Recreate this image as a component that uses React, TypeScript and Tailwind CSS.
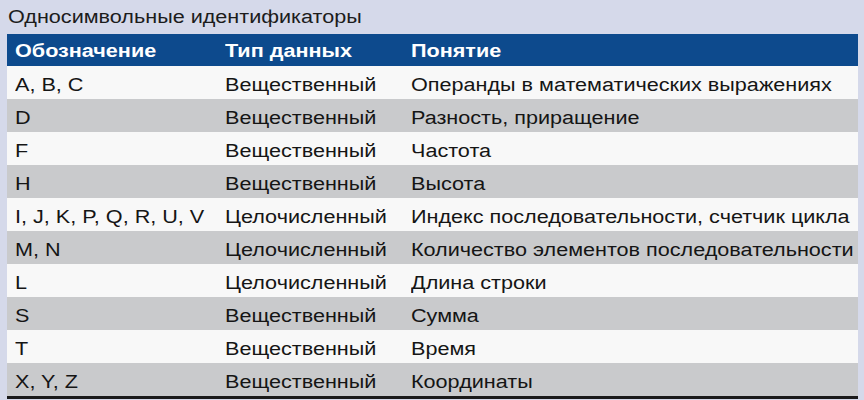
const rows: [string, string, string][] = [
  ["A, B, C", "Вещественный", "Операнды в математических выражениях"],
  ["D", "Вещественный", "Разность, приращение"],
  ["F", "Вещественный", "Частота"],
  ["H", "Вещественный", "Высота"],
  ["I, J, K, P, Q, R, U, V", "Целочисленный", "Индекс последовательности, счетчик цикла"],
  ["M, N", "Целочисленный", "Количество элементов последовательности"],
  ["L", "Целочисленный", "Длина строки"],
  ["S", "Вещественный", "Сумма"],
  ["T", "Вещественный", "Время"],
  ["X, Y, Z", "Вещественный", "Координаты"],
]

// the source picture is stretched sideways, so text is widened a bit
function Txt({ children }: { children: string }) {
  return <span className="inline-block origin-left scale-x-[1.2] whitespace-nowrap">{children}</span>
}

export default function App() {
  return (
    <div className="w-[864px] h-[400px] overflow-hidden bg-[#d5d9ea] font-['Liberation_Sans',Arial,sans-serif] text-[#151515]">
      <div className="h-[34px] pl-[8px] pt-[6px] text-[18px] leading-[22px] text-[#1c1c1c]">
        <Txt>Односимвольные идентификаторы</Txt>
      </div>
      <div className="ml-[7px] w-[851px]">
        <div className="flex h-[32px] items-center pt-[3px] bg-[#0d4a8d] text-[18px] font-bold text-white">
          <div className="w-[211px] pl-[8px]"><Txt>Обозначение</Txt></div>
          <div className="w-[186px] pl-[7px]"><Txt>Тип данных</Txt></div>
          <div className="flex-1 pl-[7px]"><Txt>Понятие</Txt></div>
        </div>
        {rows.map((r, i) => (
          <div
            key={r[0]}
            className={`flex h-[33px] items-center pt-[5px] text-[18px] ${i % 2 === 0 ? "bg-[#f8f8f8]" : "bg-[#c9cacc]"}`}
          >
            <div className="w-[211px] pl-[8px]"><Txt>{r[0]}</Txt></div>
            <div className="w-[186px] pl-[7px]"><Txt>{r[1]}</Txt></div>
            <div className="flex-1 pl-[7px]"><Txt>{r[2]}</Txt></div>
          </div>
        ))}
        <div className="h-[3px] bg-[#1a1a1a]" />
      </div>
    </div>
  )
}
